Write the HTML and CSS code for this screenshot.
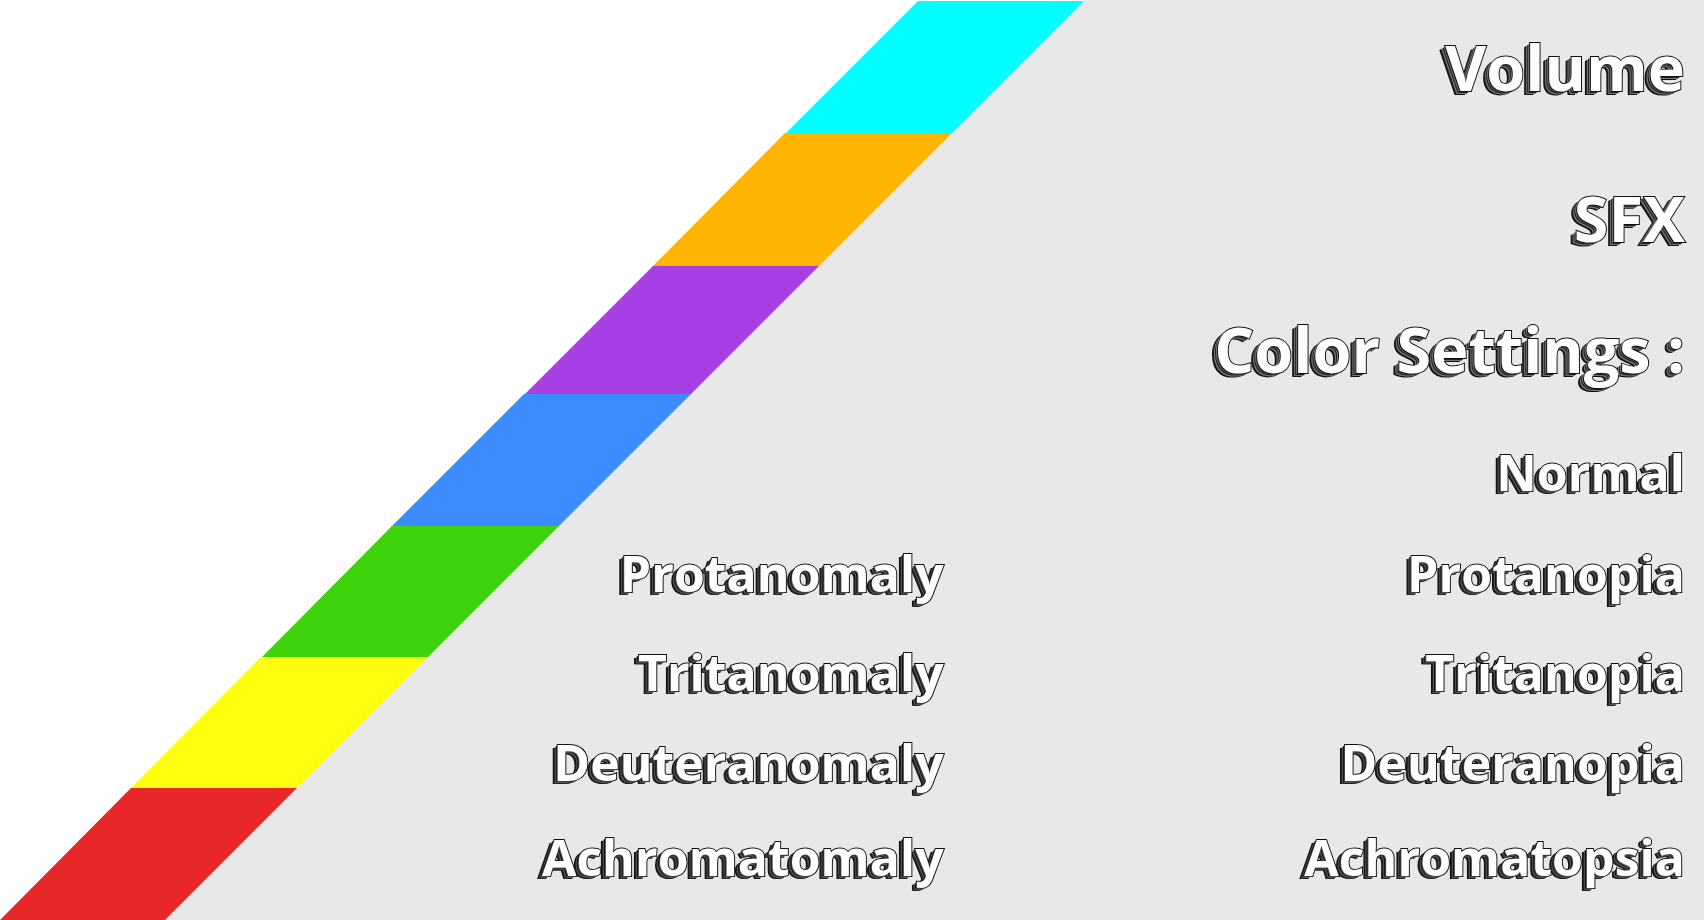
FILE: index.html
```html
<!DOCTYPE html>
<html lang="en">
<head>
<meta charset="utf-8">
<title>Settings</title>
<link rel="stylesheet" href="styles.css">
</head>
<body>
<main class="settings">
  <svg class="backdrop" viewBox="0 0 1704 920" preserveAspectRatio="none" aria-hidden="true">
    <path fill="#e8e8e8" d="M1084 0H1704V920H164Z"/>
    <path fill="#00ffff" d="M918 1H1084L951 134H785Z"/>
    <path fill="#ffb400" d="M785 133H952L818 267H652Z"/>
    <path fill="#a83fe5" d="M653 266H819L690 395H524Z"/>
    <path fill="#3c8cff" d="M524 394H691L558 527H391Z"/>
    <path fill="#3dd40b" d="M392 526H559L427 658H261Z"/>
    <path fill="#ffff0d" d="M261 657H428L296 789H130Z"/>
    <path fill="#e82828" d="M131 788H297L165 920H0Z"/>
  </svg>
  <h2 class="heading">Volume</h2>
  <h2 class="heading">SFX</h2>
  <h2 class="heading">Color Settings :</h2>
  <button class="option wide" type="button">Normal</button>
  <button class="option" type="button">Protanomaly</button>
  <button class="option" type="button">Protanopia</button>
  <button class="option" type="button">Tritanomaly</button>
  <button class="option" type="button">Tritanopia</button>
  <button class="option" type="button">Deuteranomaly</button>
  <button class="option" type="button">Deuteranopia</button>
  <button class="option" type="button">Achromatomaly</button>
  <button class="option" type="button">Achromatopsia</button>
</main>
</body>
</html>
```
FILE: styles.css
```css
body {
  margin: 0;
  background: #fff;
}

.settings {
  position: relative;
  box-sizing: border-box;
  min-height: 100vh;
  display: grid;
  grid-template-columns: 56% 1fr;
  grid-template-rows: 99fr 151fr 131fr 117fr 101fr 99fr 90fr 95fr;
  align-items: end;
  justify-items: end;
  padding: 0 19px 37px 0;
  font-family: "Open Sans", "Noto Sans", sans-serif;
}

.backdrop {
  position: absolute;
  inset: 0;
  width: 100%;
  height: 100%;
}

.heading,
.option {
  position: relative;
  margin: 0;
  padding: 0;
  border: 0;
  background: none;
  color: #fff;
  font-family: inherit;
  font-weight: 700;
  white-space: nowrap;
  -webkit-text-stroke: 2px #111;
  paint-order: stroke fill;
}

.heading {
  grid-column: 1 / -1;
  font-size: 63px;
  line-height: 64px;
  text-shadow:
    -1px 1px #111,
    -2px 1px #777,
    -3px 2px #222,
    -4px 3px #777,
    -5px 3px #222,
    -6px 4px #111;
}

.option {
  font-size: 50px;
  line-height: 52px;
  cursor: pointer;
  text-shadow:
    -1px 1px #444,
    -2px 1px #111,
    -3px 2px #555,
    -4px 3px #222,
    -5px 3px #111;
}

.wide {
  grid-column: 1 / -1;
}
```
